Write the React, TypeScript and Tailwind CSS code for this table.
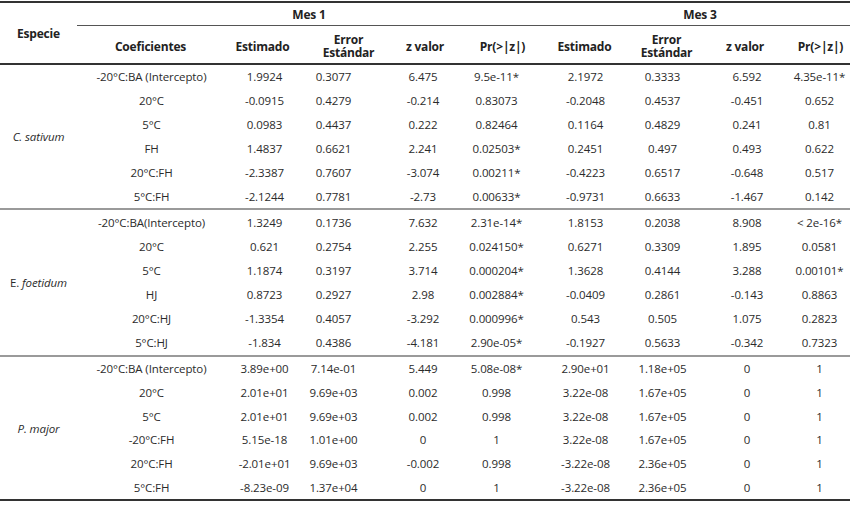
import React from "react";

type Group = { genus: string; species: string; height: string; rows: string[][] };

const cols = "grid grid-cols-[131px_91px_79px_82px_81px_83px_81px_78px_67px]";

// nudges so the text sits where it does in the printed table
const dataPad = ["pl-[18px]", "pl-[22px]", "pr-[10px]", "pl-[8px]", "pr-[8px]", "pl-[6px]", "pr-[4px]", "pl-[6px]", "pl-[6px]"];
const headPad = ["pl-[16px]", "pl-[18px]", "pl-[20px]", "pl-[12px]", "pl-[4px]", "pl-[4px]", "pl-[4px]", "pl-[2px]", "pl-[8px]"];

const heads = ["Coeficientes", "Estimado", "Error\nEstándar", "z valor", "Pr(>|z|)", "Estimado", "Error\nEstándar", "z valor", "Pr(>|z|)"];

const groups: Group[] = [
  {
    genus: "C.",
    species: "sativum",
    height: "h-[143px]",
    rows: [
      ["-20°C:BA (Intercepto)", "1.9924", "0.3077", "6.475", "9.5e-11*", "2.1972", "0.3333", "6.592", "4.35e-11*"],
      ["20°C", "-0.0915", "0.4279", "-0.214", "0.83073", "-0.2048", "0.4537", "-0.451", "0.652"],
      ["5°C", "0.0983", "0.4437", "0.222", "0.82464", "0.1164", "0.4829", "0.241", "0.81"],
      ["FH", "1.4837", "0.6621", "2.241", "0.02503*", "0.2451", "0.497", "0.493", "0.622"],
      ["20°C:FH", "-2.3387", "0.7607", "-3.074", "0.00211*", "-0.4223", "0.6517", "-0.648", "0.517"],
      ["5°C:FH", "-2.1244", "0.7781", "-2.73", "0.00633*", "-0.9731", "0.6633", "-1.467", "0.142"],
    ],
  },
  {
    genus: "E.",
    species: "foetidum",
    height: "h-[147px]",
    rows: [
      ["-20°C:BA(Intercepto)", "1.3249", "0.1736", "7.632", "2.31e-14*", "1.8153", "0.2038", "8.908", "< 2e-16*"],
      ["20°C", "0.621", "0.2754", "2.255", "0.024150*", "0.6271", "0.3309", "1.895", "0.0581"],
      ["5°C", "1.1874", "0.3197", "3.714", "0.000204*", "1.3628", "0.4144", "3.288", "0.00101*"],
      ["HJ", "0.8723", "0.2927", "2.98", "0.002884*", "-0.0409", "0.2861", "-0.143", "0.8863"],
      ["20°C:HJ", "-1.3354", "0.4057", "-3.292", "0.000996*", "0.543", "0.505", "1.075", "0.2823"],
      ["5°C:HJ", "-1.834", "0.4386", "-4.181", "2.90e-05*", "-0.1927", "0.5633", "-0.342", "0.7323"],
    ],
  },
  {
    genus: "P.",
    species: "major",
    height: "h-[146px]",
    rows: [
      ["-20°C:BA (Intercepto)", "3.89e+00", "7.14e-01", "5.449", "5.08e-08*", "2.90e+01", "1.18e+05", "0", "1"],
      ["20°C", "2.01e+01", "9.69e+03", "0.002", "0.998", "3.22e-08", "1.67e+05", "0", "1"],
      ["5°C", "2.01e+01", "9.69e+03", "0.002", "0.998", "3.22e-08", "1.67e+05", "0", "1"],
      ["-20°C:FH", "5.15e-18", "1.01e+00", "0", "1", "3.22e-08", "1.67e+05", "0", "1"],
      ["20°C:FH", "-2.01e+01", "9.69e+03", "-0.002", "0.998", "-3.22e-08", "2.36e+05", "0", "1"],
      ["5°C:FH", "-8.23e-09", "1.37e+04", "0", "1", "-3.22e-08", "2.36e+05", "0", "1"],
    ],
  },
];

export default function App() {
  return (
    <div className="w-[850px] h-[511px] bg-white pt-px font-['Open_Sans',sans-serif] text-[11.5px] leading-[13px] tracking-[-0.1px] text-[#2b2b2b]">
      {/* Header */}
      <div className="flex border-t-2 border-b-2 border-[#333] text-[12px] tracking-[-0.2px]">
        <div className="w-[77px] flex items-center justify-center font-bold text-[#222]">Especie</div>
        <div className="flex-1 flex flex-col">
          <div className={`${cols} h-[23px] border-b border-[#555] font-bold text-[#222]`}>
            <div className="col-span-5 flex items-center justify-center pt-px">Mes 1</div>
            <div className="col-span-4 flex items-center justify-center pl-[9px] pt-px">Mes 3</div>
          </div>
          <div className={`${cols} h-[37px] font-bold text-[#222]`}>
            {heads.map((h, i) => (
              <div key={i} className={`flex items-center justify-center text-center whitespace-pre-line pt-[3px] ${headPad[i]}`}>
                {h}
              </div>
            ))}
          </div>
        </div>
      </div>

      {/* Species groups */}
      {groups.map((g, gi) => (
        <div
          key={g.species}
          className={`flex ${g.height} ${gi > 0 ? "border-t-2 border-[#9a9a9a]" : ""} ${gi === groups.length - 1 ? "border-b-2 border-b-[#333]" : ""}`}
        >
          <div className="w-[77px] flex items-center justify-center whitespace-nowrap">
            <span className={g.genus === "E." ? "" : "italic"}>{g.genus}</span>
            <span className="italic">&nbsp;{g.species}</span>
          </div>
          <div className="flex-1 flex flex-col">
            {g.rows.map((r, ri) => (
              <div key={ri} className={`${cols} flex-1`}>
                {r.map((c, ci) => (
                  <div key={ci} className={`flex items-center justify-center whitespace-nowrap ${dataPad[ci]}`}>
                    {c}
                  </div>
                ))}
              </div>
            ))}
          </div>
        </div>
      ))}
    </div>
  );
}
